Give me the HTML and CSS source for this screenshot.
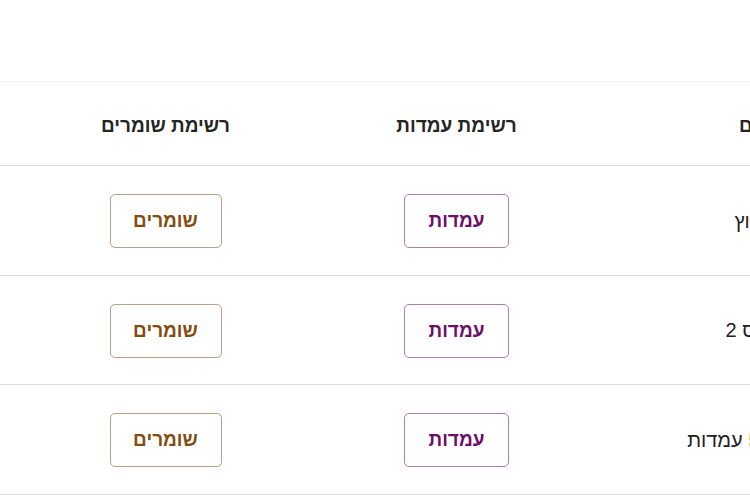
FILE: index.html
```html
<!DOCTYPE html>
<html lang="he">
<head>
<meta charset="utf-8">
<link rel="stylesheet" href="styles.css">
</head>
<body>
<div class="page">
  <div class="top"></div>
  <div class="scroller">
    <table class="grid" dir="rtl">
      <thead>
        <tr>
          <th class="name">שם</th>
          <th class="col">רשימת עמדות</th>
          <th class="col">רשימת שומרים</th>
          <th class="edge"></th>
        </tr>
      </thead>
      <tbody>
        <tr>
          <td class="name">שמירת הקיבוץ</td>
          <td class="col"><button class="btn btn-posts">עמדות</button></td>
          <td class="col"><button class="btn btn-guards">שומרים</button></td>
          <td class="edge"></td>
        </tr>
        <tr>
          <td class="name">שמירות בסיס 2</td>
          <td class="col"><button class="btn btn-posts">עמדות</button></td>
          <td class="col"><button class="btn btn-guards">שומרים</button></td>
          <td class="edge"></td>
        </tr>
        <tr>
          <td class="name">בסיס דרום <span class="count">5</span> עמדות</td>
          <td class="col"><button class="btn btn-posts">עמדות</button></td>
          <td class="col"><button class="btn btn-guards">שומרים</button></td>
          <td class="edge"></td>
        </tr>
      </tbody>
    </table>
  </div>
</div>
</body>
</html>
```

FILE: styles.css
```css
html, body {
  margin: 0;
  padding: 0;
  background: #ffffff;
}
body {
  font-family: "Liberation Sans", Arial, sans-serif;
  color: #222222;
}
.page {
  width: 750px;
  height: 500px;
  overflow: hidden;
}
.top {
  height: 81px;
}
.scroller {
  direction: ltr;
  overflow: hidden;
  width: 750px;
}
.grid {
  direction: rtl;
  border-collapse: collapse;
  width: 1000px;
  table-layout: fixed;
}
.grid th {
  height: 84px;
  box-sizing: border-box;
  padding: 4px 0 0 0;
  font-size: 19px;
  font-weight: 700;
  color: #252525;
  text-align: center;
  border-top: 1px solid #f2f2f2;
  border-bottom: 1px solid #dcdcdc;
}
.grid td {
  height: 109.5px;
  box-sizing: border-box;
  padding: 2px 0 0 0;
  font-size: 19px;
  color: #222;
  text-align: center;
  border-bottom: 1px solid #dcdcdc;
}
.grid td.name {
  text-align: right;
  padding-right: 146px;
  font-size: 20px;
}
.grid th.name {
  text-align: right;
  padding-right: 232px;
}
.name {
  width: 398px;
}
.col {
  width: 291px;
}
.edge {
  width: 20px;
}
.count {
  color: #e0a030;
}
.btn {
  font-family: "Liberation Sans", Arial, sans-serif;
  font-size: 19px;
  font-weight: 700;
  background: #ffffff;
  border-radius: 5px;
  height: 54px;
  padding: 0;
  text-align: center;
  cursor: pointer;
}
.btn-posts {
  color: #6e0f6a;
  border: 1px solid #b07fae;
  width: 105px;
}
.btn-guards {
  color: #844d10;
  border: 1px solid #bda083;
  width: 112px;
}
```
